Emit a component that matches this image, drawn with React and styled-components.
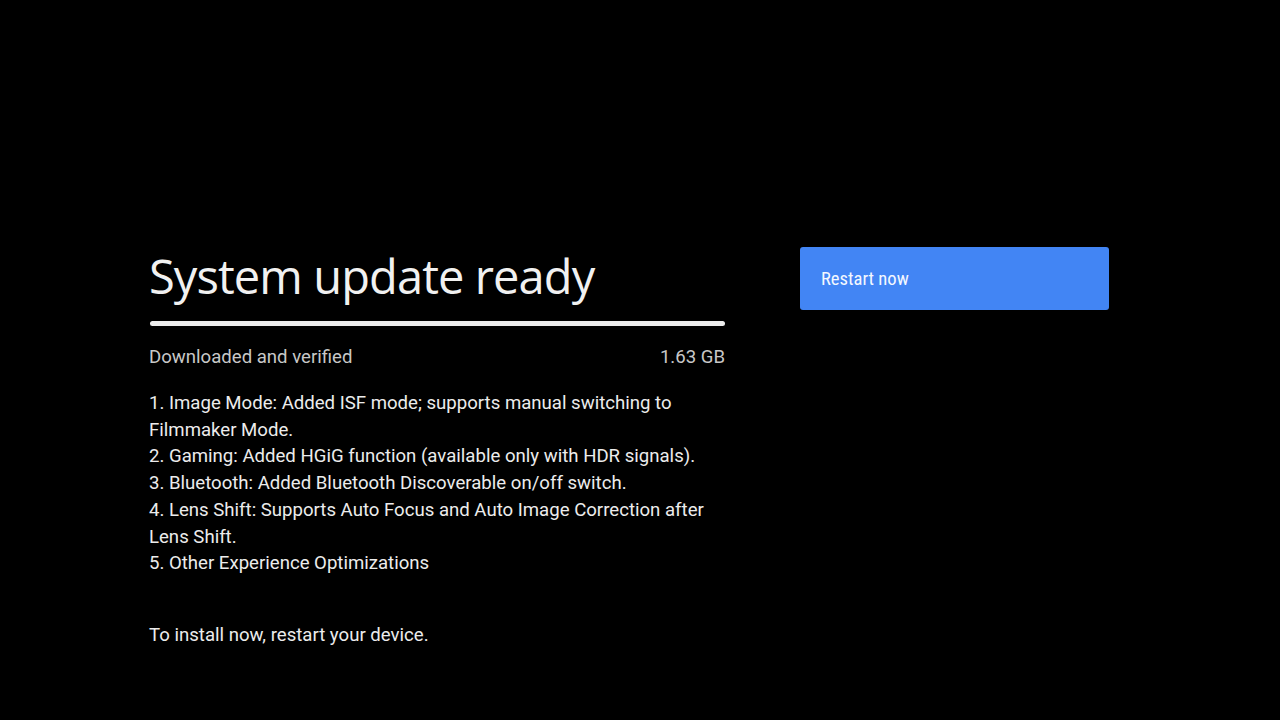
import React from "react";
import styled, { createGlobalStyle } from "styled-components";

const Global = createGlobalStyle`
  html, body {
    margin: 0;
    background: #000;
  }
  body {
    font-family: Roboto, "Noto Sans", sans-serif;
  }
`;

const Screen = styled.div`
  width: 1280px;
  height: 720px;
  background: #000;
  display: flex;
  padding: 244px 0 0 149px;
  box-sizing: border-box;
`;

const LeftCol = styled.div`
  width: 576px;
  display: flex;
  flex-direction: column;
`;

const Title = styled.h1`
  margin: 0;
  font-family: "Open Sans", Lato, sans-serif;
  font-weight: 400;
  font-size: 47px;
  line-height: 64px;
  color: #f1f1f1;
  letter-spacing: -0.9px;
`;

const Progress = styled.div`
  margin-top: 13px;
  margin-left: 1px;
  height: 5px;
  border-radius: 3px;
  background: #ececec;
`;

const StatusRow = styled.div`
  margin-top: 18px;
  display: flex;
  justify-content: space-between;
  font-size: 18.6px;
  line-height: 26px;
  color: #c8c8c8;
`;

const Notes = styled.div`
  margin-top: 20px;
  font-size: 18.6px;
  line-height: 26.7px;
  color: #ececec;
`;

const Hint = styled.p`
  margin: 45px 0 0;
  font-size: 18.6px;
  line-height: 26px;
  color: #ececec;
`;

const RightCol = styled.div`
  margin-left: 75px;
  padding-top: 3px;
`;

const RestartButton = styled.button`
  width: 309px;
  height: 63px;
  border: none;
  border-radius: 3px;
  background: #4285f4;
  color: #f4f8ff;
  font-family: Roboto, sans-serif;
  font-size: 18.6px;
  text-align: left;
  padding: 0 0 0 21px;
  font-stretch: condensed;
`;

const notes = [
  "1. Image Mode: Added ISF mode; supports manual switching to Filmmaker Mode.",
  "2. Gaming: Added HGiG function (available only with HDR signals).",
  "3. Bluetooth: Added Bluetooth Discoverable on/off switch.",
  "4. Lens Shift: Supports Auto Focus and Auto Image Correction after Lens Shift.",
  "5. Other Experience Optimizations",
];

export default function App() {
  return (
    <>
      <Global />
      <Screen>
        <LeftCol>
          <Title>System update ready</Title>
          <Progress />
          <StatusRow>
            <span>Downloaded and verified</span>
            <span>1.63 GB</span>
          </StatusRow>
          <Notes>
            {notes.map((n) => (
              <div key={n}>{n}</div>
            ))}
          </Notes>
          <Hint>To install now, restart your device.</Hint>
        </LeftCol>
        <RightCol>
          <RestartButton>Restart now</RestartButton>
        </RightCol>
      </Screen>
    </>
  );
}
